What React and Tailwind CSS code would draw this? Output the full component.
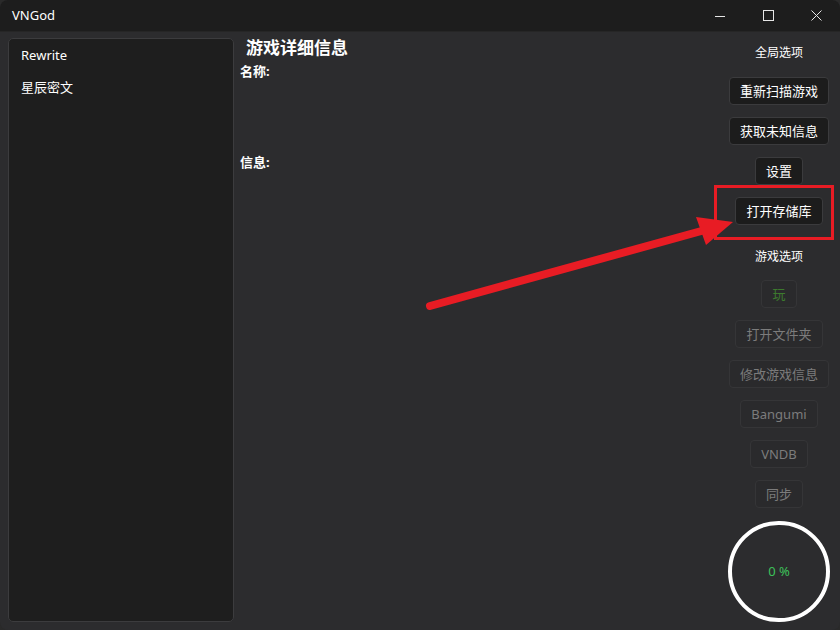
import React from "react";

const font = { fontFamily: '"Noto Sans", "Noto Sans CJK SC", sans-serif' };

function Btn({ children, disabled, green }) {
  return (
    <button
      className={
        "h-[28px] px-[10px] rounded-[4px] border text-[13px] leading-none " +
        (disabled
          ? "bg-[#2a2a2c] border-[#353537] text-[#7c7c7c]"
          : "bg-[#1c1c1c] border-[#3b3b3d] text-white")
      }
      style={green ? { color: "#3d7a2e" } : undefined}
    >
      {children}
    </button>
  );
}

export default function App() {
  return (
    <div className="w-[840px] h-[630px] bg-[#2a2a2a] overflow-hidden" style={font}>
      <div className="relative w-full h-full rounded-[8px] overflow-hidden bg-[#2c2c2e] flex flex-col">
        {/* title bar */}
        <div className="h-[32px] bg-[#1d1d1d] border-b border-[#262626] flex items-center shrink-0">
          <span className="ml-[12px] text-[13px] text-white">VNGod</span>
          <div className="ml-auto flex items-center h-full">
            <div className="w-[48px] h-full flex items-center justify-center">
              <svg width="10" height="10" viewBox="0 0 10 10"><line x1="0" y1="5.5" x2="10" y2="5.5" stroke="#e6e6e6" strokeWidth="1" /></svg>
            </div>
            <div className="w-[48px] h-full flex items-center justify-center">
              <svg width="11" height="11" viewBox="0 0 11 11"><rect x="0.5" y="0.5" width="10" height="10" fill="none" stroke="#e6e6e6" strokeWidth="1" /></svg>
            </div>
            <div className="w-[48px] h-full flex items-center justify-center">
              <svg width="11" height="11" viewBox="0 0 11 11"><path d="M0.5 0.5 L10.5 10.5 M10.5 0.5 L0.5 10.5" stroke="#e6e6e6" strokeWidth="1" /></svg>
            </div>
          </div>
        </div>

        {/* body */}
        <div className="flex-1 flex min-h-0 pt-[6px] pb-[8px] pl-[8px]">
          {/* list */}
          <div className="w-[226px] bg-[#1e1e1e] border border-[#3c3c3e] rounded-[5px] flex flex-col pt-[1px]">
            <div className="h-[32px] flex items-center pl-[12px] text-[13px] text-white">Rewrite</div>
            <div className="h-[32px] flex items-center pl-[12px] text-[13px] text-white">星辰密文</div>
          </div>

          {/* details */}
          <div className="flex-1 flex flex-col pl-[6px]">
            <div className="pl-[6px] text-[17px] font-bold text-white leading-[22px] mt-[-1px]">游戏详细信息</div>
            <div className="text-[13px] font-bold text-white leading-[18px] mt-[3px]">名称:</div>
            <div className="text-[13px] font-bold text-white leading-[18px] mt-[73px]">信息:</div>
          </div>

          {/* right column */}
          <div className="w-[120px] flex flex-col items-center mr-[1px]">
            <div className="text-[12px] text-white leading-[16px] mt-[7px]">全局选项</div>
            <div className="flex flex-col items-center gap-[12px] mt-[16px]">
              <Btn>重新扫描游戏</Btn>
              <Btn>获取未知信息</Btn>
              <Btn>设置</Btn>
              <Btn>打开存储库</Btn>
            </div>
            <div className="text-[12px] text-white leading-[16px] mt-[24px]">游戏选项</div>
            <div className="flex flex-col items-center gap-[12px] mt-[15px]">
              <Btn disabled green>玩</Btn>
              <Btn disabled>打开文件夹</Btn>
              <Btn disabled>修改游戏信息</Btn>
              <Btn disabled>Bangumi</Btn>
              <Btn disabled>VNDB</Btn>
              <Btn disabled>同步</Btn>
            </div>
            <div className="mt-[13px] w-[102px] h-[102px] rounded-full border-[4px] border-white flex items-center justify-center">
              <span className="text-[13px] text-[#3cc15a]">0 %</span>
            </div>
          </div>
        </div>

        {/* annotation overlay */}
        <svg className="absolute left-0 top-0 pointer-events-none" width="840" height="630" viewBox="0 0 840 630">
          <rect x="715.5" y="186.5" width="117" height="52" fill="none" stroke="#e81c24" strokeWidth="3" />
          <line x1="430" y1="306" x2="705" y2="230" stroke="#e81c24" strokeWidth="8" strokeLinecap="round" />
          <polygon points="733,222 696,217 706,245" fill="#e81c24" />
        </svg>
      </div>
    </div>
  );
}
